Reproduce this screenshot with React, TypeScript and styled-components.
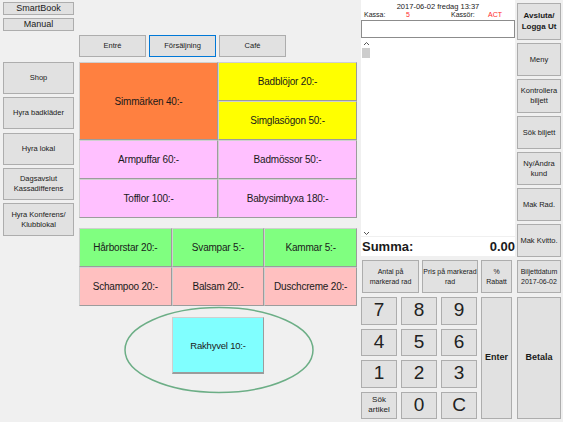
import React from 'react';
import styled, { createGlobalStyle } from 'styled-components';

const GlobalStyle = createGlobalStyle`
  html, body {
    margin: 0;
    padding: 0;
    background: #f0f0f0;
  }
  body {
    font-family: "Liberation Sans", Arial, sans-serif;
    color: #1a1a1a;
  }
`;

const Screen = styled.div`
  display: flex;
  width: 563px;
  height: 422px;
  padding-left: 3px;
  box-sizing: border-box;
  background: #f0f0f0;
  overflow: hidden;
`;

const Column = styled.div<{ $width: number; $offset?: number; $top?: number; $gap?: number }>`
  width: ${({ $width }) => $width}px;
  margin-left: ${({ $offset }) => $offset ?? 0}px;
  padding-top: ${({ $top }) => $top ?? 0}px;
  flex-shrink: 0;
  display: flex;
  flex-direction: column;
  gap: ${({ $gap }) => $gap ?? 0}px;
`;

const WinButton = styled.button<{ $h?: number; $bold?: boolean; $size?: number; $focus?: boolean; $mt?: number }>`
  box-sizing: border-box;
  height: ${({ $h }) => ($h ? `${$h}px` : 'auto')};
  margin: ${({ $mt }) => $mt ?? 0}px 0 0 0;
  padding: 0 1px;
  background: #e1e1e1;
  border: 1px solid ${({ $focus }) => ($focus ? '#0078d7' : '#adadad')};
  font-family: inherit;
  font-size: ${({ $size }) => $size ?? 7.5}px;
  font-weight: ${({ $bold }) => ($bold ? 700 : 400)};
  line-height: 1.3;
  white-space: nowrap;
  color: #1a1a1a;
  display: flex;
  align-items: center;
  justify-content: center;
  text-align: center;
`;

/* ---------- middle: products ---------- */

const TabRow = styled.div`
  display: flex;
  gap: 3px;
  padding-top: 35px;
`;

const Tab = styled(WinButton)`
  width: 67px;
  height: 22px;
  font-size: 7.5px;
`;

const ProductGrid = styled.div<{ $cols: number; $mt: number }>`
  display: grid;
  grid-template-columns: repeat(${({ $cols }) => $cols}, 1fr);
  grid-auto-rows: 39px;
  margin-top: ${({ $mt }) => $mt}px;
`;

const Product = styled.div<{ $bg: string; $span?: number }>`
  box-sizing: border-box;
  background: ${({ $bg }) => $bg};
  grid-row: span ${({ $span }) => $span ?? 1};
  border: 1px solid;
  border-color: #cfcfcf #9c9c9c #9c9c9c #cfcfcf;
  display: flex;
  align-items: center;
  justify-content: center;
  font-size: 10px;
  letter-spacing: -0.2px;
  color: #1a1a1a;
`;

const Highlight = styled.div`
  position: relative;
  display: flex;
  justify-content: center;
  padding-top: 11px;
  height: 90px;
`;

const Ring = styled.svg`
  position: absolute;
  left: 0;
  top: 0;
  pointer-events: none;
`;

const Single = styled(Product)`
  width: 92px;
  height: 57px;
  border-bottom: 2px solid #9c9c9c;
  font-size: 9.5px;
`;

/* ---------- register ---------- */

const Receipt = styled.div`
  background: #fff;
  height: 236px;
  display: flex;
  flex-direction: column;
`;

const DateLine = styled.div`
  text-align: center;
  font-size: 7.5px;
  padding-top: 2px;
  height: 9px;
  line-height: 9px;
  color: #222;
`;

const InfoLine = styled.div`
  display: grid;
  grid-template-columns: 42px 45px 37px auto;
  padding-left: 3px;
  font-size: 7px;
  height: 9px;
  line-height: 8px;
`;

const Value = styled.span`
  color: #ff2a2a;
`;

const Entry = styled.div`
  box-sizing: border-box;
  height: 18px;
  border: 1px solid #8c8c8c;
  background: #fff;
`;

const List = styled.div`
  flex: 1;
  display: flex;
`;

const ScrollBar = styled.div`
  width: 8px;
  margin: 3px 0 0 1px;
  display: flex;
  flex-direction: column;
  align-items: center;
`;

const Thumb = styled.div`
  width: 8px;
  height: 10px;
  background: #cdcdcd;
  margin-top: 2px;
`;

const SumRow = styled.div`
  margin-top: 1px;
  height: 19px;
  background: #fff;
  display: flex;
  align-items: center;
  justify-content: space-between;
  font-weight: 700;
  font-size: 13px;
  padding: 0 0 0 1px;
`;

const ActionRow = styled.div`
  display: grid;
  grid-template-columns: 57px 56px 31px;
  gap: 3px;
  height: 33px;
  margin: 4px 0 0 1px;
`;

const Numpad = styled.div`
  display: grid;
  grid-template-columns: 36px 36px 36px 31px;
  grid-template-rows: repeat(4, 1fr);
  gap: 4px;
  height: 122px;
  margin-top: 4px;
`;

const Key = styled(WinButton)<{ $tall?: boolean }>`
  height: auto;
  grid-row: ${({ $tall }) => ($tall ? '1 / span 4' : 'auto')};
  grid-column: ${({ $tall }) => ($tall ? '4' : 'auto')};
`;

const Digit = styled(Key)`
  font-size: 19px;
  color: #222;
`;

const Chevron = ({ up }: { up?: boolean }) => (
  <svg width="7" height="5" viewBox="0 0 7 5">
    <path d={up ? 'M1 4 L3.5 1.5 L6 4' : 'M1 1 L3.5 3.5 L6 1'} fill="none" stroke="#555" strokeWidth="1" />
  </svg>
);

export default function App() {
  return (
    <>
      <GlobalStyle />
      <Screen>
        <Column $width={71} $top={2} $gap={3}>
          <WinButton $h={13} $size={9}>SmartBook</WinButton>
          <WinButton $h={13} $size={9}>Manual</WinButton>
          <WinButton $h={32} $mt={28}>Shop</WinButton>
          <WinButton $h={32}>Hyra badkläder</WinButton>
          <WinButton $h={32} $mt={1}>Hyra lokal</WinButton>
          <WinButton $h={32}>Dagsavslut<br />Kassadifferens</WinButton>
          <WinButton $h={33}>Hyra Konferens/<br />Klubblokal</WinButton>
        </Column>

        <Column $width={278} $offset={5}>
          <TabRow>
            <Tab>Entré</Tab>
            <Tab $focus>Försäljning</Tab>
            <Tab>Café</Tab>
          </TabRow>

          <ProductGrid $cols={2} $mt={5}>
            <Product $bg="#ff8040" $span={2}>Simmärken 40:-</Product>
            <Product $bg="#ffff00">Badblöjor 20:-</Product>
            <Product $bg="#ffff00">Simglasögon 50:-</Product>
            <Product $bg="#ffc0ff">Armpuffar 60:-</Product>
            <Product $bg="#ffc0ff">Badmössor 50:-</Product>
            <Product $bg="#ffc0ff">Tofflor 100:-</Product>
            <Product $bg="#ffc0ff">Babysimbyxa 180:-</Product>
          </ProductGrid>

          <ProductGrid $cols={3} $mt={10}>
            <Product $bg="#80ff80">Hårborstar 20:-</Product>
            <Product $bg="#80ff80">Svampar 5:-</Product>
            <Product $bg="#80ff80">Kammar 5:-</Product>
            <Product $bg="#ffc0c0">Schampoo 20:-</Product>
            <Product $bg="#ffc0c0">Balsam 20:-</Product>
            <Product $bg="#ffc0c0">Duschcreme 20:-</Product>
          </ProductGrid>

          <Highlight>
            <Ring width="278" height="90" viewBox="0 0 278 90">
              <ellipse cx="140" cy="44" rx="94" ry="42.5" fill="none" stroke="#6cae86" strokeWidth="1.5" />
            </Ring>
            <Single $bg="#80ffff">Rakhyvel 10:-</Single>
          </Highlight>
        </Column>

        <Column $width={154} $offset={4}>
          <Receipt>
            <DateLine>2017-06-02 fredag 13:37</DateLine>
            <InfoLine>
              <span>Kassa:</span>
              <Value>5</Value>
              <span>Kassör:</span>
              <Value>ACT</Value>
            </InfoLine>
            <Entry />
            <List>
              <ScrollBar>
                <Chevron up />
                <Thumb />
                <div style={{ flex: 1 }} />
                <Chevron />
              </ScrollBar>
            </List>
          </Receipt>
          <SumRow>
            <span>Summa:</span>
            <span>0.00</span>
          </SumRow>
          <ActionRow>
            <WinButton $size={7}>Antal på<br />markerad rad</WinButton>
            <WinButton $size={7}>Pris på markerad<br />rad</WinButton>
            <WinButton $size={7}>%<br />Rabatt</WinButton>
          </ActionRow>
          <Numpad>
            <Digit>7</Digit>
            <Digit>8</Digit>
            <Digit>9</Digit>
            <Key $tall $bold $size={9}>Enter</Key>
            <Digit>4</Digit>
            <Digit>5</Digit>
            <Digit>6</Digit>
            <Digit>1</Digit>
            <Digit>2</Digit>
            <Digit>3</Digit>
            <Key $size={8}>Sök<br />artikel</Key>
            <Digit>0</Digit>
            <Digit>C</Digit>
          </Numpad>
        </Column>

        <Column $width={44} $offset={2} $top={3} $gap={3}>
          <WinButton $h={37} $bold $size={8}>Avsluta/<br />Logga Ut</WinButton>
          <WinButton $h={33}>Meny</WinButton>
          <WinButton $h={34}>Kontrollera<br />biljett</WinButton>
          <WinButton $h={33}>Sök biljett</WinButton>
          <WinButton $h={33}>Ny/Ändra<br />kund</WinButton>
          <WinButton $h={33}>Mak Rad.</WinButton>
          <WinButton $h={33}>Mak Kvitto.</WinButton>
          <WinButton $h={33} $size={7}>Biljettdatum<br />2017-06-02</WinButton>
          <WinButton $h={122} $mt={1} $bold $size={9}>Betala</WinButton>
        </Column>
      </Screen>
    </>
  );
}
